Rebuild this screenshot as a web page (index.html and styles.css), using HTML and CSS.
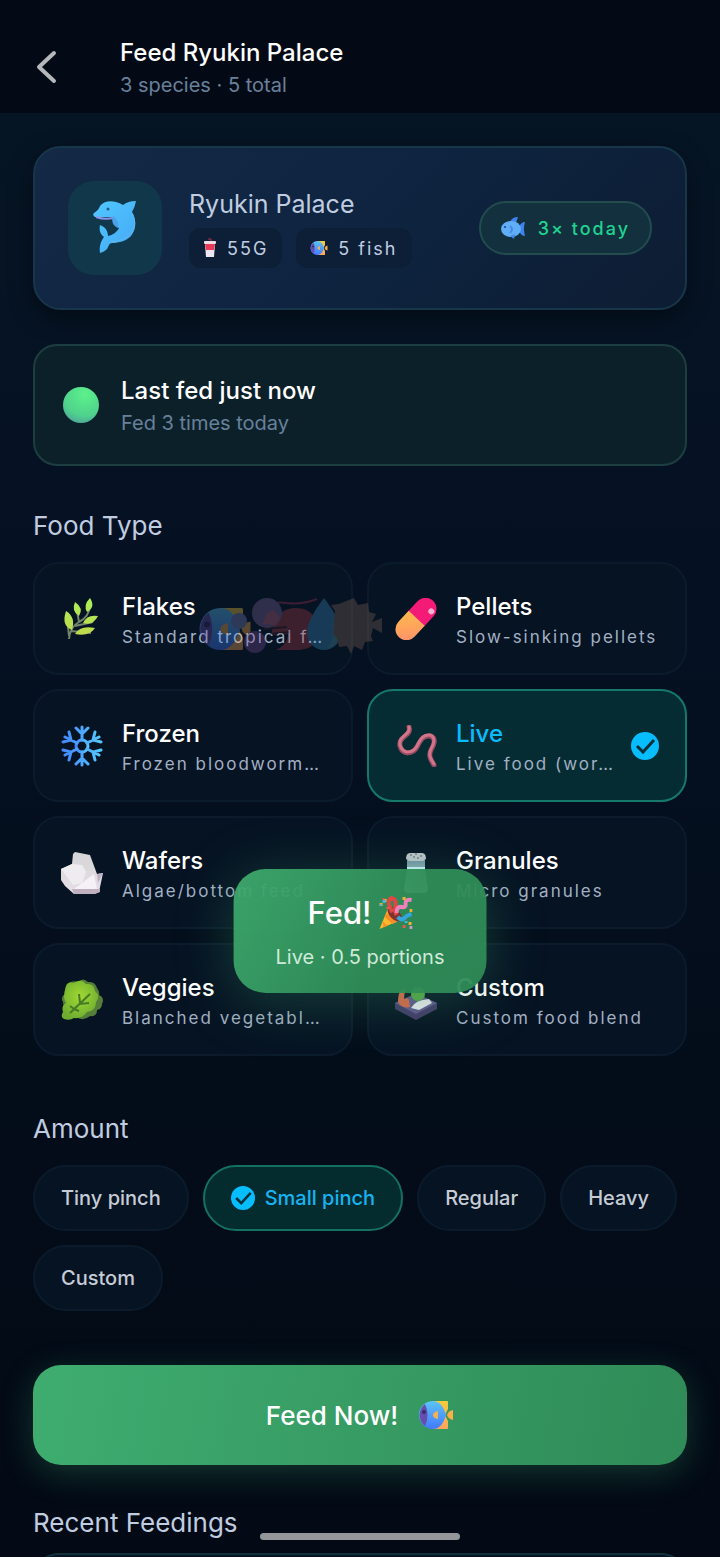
FILE: index.html
```html
<!DOCTYPE html>
<html lang="en">
<head>
<meta charset="utf-8">
<meta name="viewport" content="width=device-width, initial-scale=1">
<title>Feed Ryukin Palace</title>
<link rel="stylesheet" href="styles.css">
</head>
<body>

<!-- shared icons -->
<svg class="sprite" aria-hidden="true">
  <defs>
    <linearGradient id="fishBlue" x1="0" y1="0" x2="0" y2="1"><stop offset="0" stop-color="#5cc4f5"/><stop offset="1" stop-color="#4379ff"/></linearGradient>
    <linearGradient id="fishGold" x1="0" y1="0" x2="0" y2="1"><stop offset="0" stop-color="#f8cc3a"/><stop offset="1" stop-color="#ffa45c"/></linearGradient>
    <linearGradient id="cyan" x1="0" y1="0" x2="1" y2="1"><stop offset="0" stop-color="#50c8ff"/><stop offset="1" stop-color="#45a8f5"/></linearGradient>
    <linearGradient id="ice" x1="0" y1="0" x2="1" y2="0"><stop offset="0" stop-color="#4388ff"/><stop offset="1" stop-color="#55c8ff"/></linearGradient>
    <linearGradient id="leaf" x1="0" y1="0" x2="0" y2="1"><stop offset="0" stop-color="#a9f05a"/><stop offset="1" stop-color="#c0d84c"/></linearGradient>
    <linearGradient id="rock" x1="0" y1="0" x2="0" y2="1"><stop offset="0" stop-color="#d5d4d5"/><stop offset="1" stop-color="#e6e0e9"/></linearGradient>
    <linearGradient id="glass" x1="0" y1="0" x2="0" y2="1"><stop offset="0" stop-color="#7193a3"/><stop offset="1" stop-color="#dcecf0"/></linearGradient>
    <linearGradient id="pillGold" x1="0" y1="0" x2="1" y2="1"><stop offset="0" stop-color="#ffbb4c"/><stop offset="1" stop-color="#ff8d6c"/></linearGradient>
    <radialGradient id="greens" cx=".5" cy=".4" r=".6"><stop offset="0" stop-color="#a0d832"/><stop offset="1" stop-color="#6fad30"/></radialGradient>
  </defs>
  <symbol id="tropical" viewBox="0 0 36 32">
    <path d="M14 2h15a1 1 0 0 1 1 1v7l-3 6 3 6v7a1 1 0 0 1-1 1H14z" fill="url(#fishGold)"/>
    <path d="M35 11v10q-5-1-6-5 1-4 6-5z" fill="#ffad45"/>
    <path d="M15 2q9 0 13 14-4 14-13 14A14 14 0 0 1 15 2z" fill="url(#fishBlue)"/>
    <path d="M7 5a14 14 0 0 0 0 22q5-11 0-22z" fill="#674dac"/>
    <path d="M20 12v8q-5-1-5-4t5-4z" fill="#f6af53"/>
    <circle cx="6" cy="13" r="2" fill="#392c69"/>
  </symbol>
  <symbol id="check" viewBox="0 0 28 28">
    <circle cx="14" cy="14" r="14" fill="#06bdff"/>
    <path d="M6 14l6 6L23 8" fill="none" stroke="#073038" stroke-width="3"/>
  </symbol>
</svg>

<header class="header">
  <button class="back" aria-label="Back">
    <svg width="24" height="34" viewBox="0 0 24 34"><path d="M20 3L5 17l15 14" fill="none" stroke="#b5b7bb" stroke-width="4" stroke-linecap="round" stroke-linejoin="round"/></svg>
  </button>
  <div class="header-text">
    <h1>Feed Ryukin Palace</h1>
    <p class="muted">3 species · 5 total</p>
  </div>
</header>

<main>
  <section class="tank">
    <div class="tank-icon">
      <svg width="46" height="58" viewBox="0 0 46 58">
        <path d="M2 14C5 12 7 10 8 7 11 3 17 1 24 3q4 1 7 3 5-4 13-4-1 6-4 11c5 9 4 18-1 24-5 5-12 7-19 7-3 0-3 3-5 6-2 2-4 3-7 4-1-7 1-12 4-16-4-3-5-7-4-12 6 2 8 7 8 11 5-1 9-4 11-8-4-2-6-6-7-11L3 18q-3-2-1-4z" fill="url(#cyan)"/>
        <path d="M4 18q9 3 17 1" fill="none" stroke="#8a94ed" stroke-width="2"/>
        <path d="M21 17c-2 5 0 10 5 12 1-4 0-8-5-12z" fill="#4ca1e9"/>
        <path d="M40 14c5 9 3 19-5 24-5 3-9 4-16 5" fill="none" stroke="#65b4e8" stroke-width="1"/>
        <circle cx="16" cy="10" r="1.5" fill="#225b83"/>
      </svg>
    </div>
    <div class="tank-info">
      <h2>Ryukin Palace</h2>
      <div class="badges">
        <span class="badge">
          <svg width="14" height="20" viewBox="0 0 14 20"><path d="M8 4V1H5" fill="none" stroke="#a9304d" stroke-width="1"/><path d="M2 6h10l-1 13H3z" fill="#eee5f2"/><path d="M2 6h10l-1 6H3z" fill="#e83b58"/><rect x="1" y="3" width="12" height="3" rx="1" fill="#f0dce5"/></svg>
          55G
        </span>
        <span class="badge"><svg width="18" height="16"><use href="#tropical"/></svg>5 fish</span>
      </div>
    </div>
    <span class="today">
      <svg width="26" height="22" viewBox="0 0 26 22"><path d="M9 5q2-5 8-5l-2 6zM18 10q2-5 6-5-2 6 0 14-4 0-6-5z" fill="#3e82ed"/><ellipse cx="10" cy="12" rx="10" ry="8" fill="#61aef8"/><path d="M9 19l5-2-1 5z" fill="#4387f0"/><path d="M9 9q4 3 0 7" fill="none" stroke="#4688e6" stroke-width="2"/><circle cx="4" cy="10" r="1" fill="#183c8f"/></svg>
      3× today
    </span>
  </section>

  <section class="status">
    <span class="orb"></span>
    <div class="status-text">
      <h3>Last fed just now</h3>
      <p class="muted">Fed 3 times today</p>
    </div>
  </section>

  <h2 class="foods-title">Food Type</h2>
  <div class="foods">
    <label class="food">
      <input type="radio" name="food">
      <svg class="food-icon" viewBox="0 0 42 42">
        <path d="M8 41Q9 29 18 24 28 19 29 8M18 24L16 13M14 28l18-4M10 33l20 2M8 38L6 20" fill="none" stroke="#73846b" stroke-width="2"/>
        <path d="M29 0q6 9-3 14-4-7 3-14zM14 4q9 6 4 14-8-5-4-14zM37 18q-5 10-15 7 4-9 15-7zM34 30q-6 9-20 6 5-9 20-6zM5 13q10 6 6 19Q0 28 5 13z" fill="url(#leaf)"/>
      </svg>
      <span class="food-text"><b>Flakes</b><small>Standard tropical f…</small></span>
    </label>
    <label class="food">
      <input type="radio" name="food">
      <svg class="food-icon" viewBox="0 0 42 42">
        <g transform="rotate(43 21 21)">
          <path d="M10 21V7a11 11 0 0 1 22 0v14z" fill="#f31b76"/>
          <path d="M10 20h22v15a11 11 0 0 1-22 0z" fill="url(#pillGold)"/>
          <circle cx="27" cy="5" r="3" fill="#ffb1cf"/>
        </g>
      </svg>
      <span class="food-text"><b>Pellets</b><small>Slow-sinking pellets</small></span>
    </label>
    <label class="food">
      <input type="radio" name="food">
      <svg class="food-icon" viewBox="0 0 42 42">
        <g fill="none" stroke="url(#ice)" stroke-width="3" stroke-linecap="round">
          <circle cx="21" cy="21" r="6"/>
          <path d="M21 15V2M15 3l6 6 6-6M21 27v13M15 39l6-6 6 6M16 18L4 12M8 7l2 8-8 2M26 24l12 6M34 35l-2-8 8-2M26 18l12-6M34 7l-2 8 8 2M16 24L4 30M8 35l2-8-8-2"/>
        </g>
      </svg>
      <span class="food-text"><b>Frozen</b><small>Frozen bloodworm…</small></span>
    </label>
    <label class="food">
      <input type="radio" name="food" checked>
      <svg class="food-icon" viewBox="0 0 42 42">
        <path d="M14 2C17 11 3 11 5 21c3 10 13 8 17 1 3-6 6-12 13-11 7 2 4 9 1 14-3 6 0 10 3 15" fill="none" stroke="#954b64" stroke-width="5" stroke-linecap="round"/>
        <path d="M14 2C16 10 3 11 5 20c3 10 13 8 17 1 3-6 6-12 13-11 6 2 4 9 1 14-3 6 0 10 3 15" fill="none" stroke="#d27589" stroke-width="3" stroke-linecap="round"/>
      </svg>
      <span class="food-text"><b>Live</b><small>Live food (wor…</small></span>
      <svg class="check"><use href="#check"/></svg>
    </label>
    <label class="food">
      <input type="radio" name="food">
      <svg class="food-icon" viewBox="0 0 42 42">
        <path d="M12 2l2-2 15 3 7 19 6-1-4 19-5 2H13L4 34 0 28V17l11-5z" fill="url(#rock)"/>
        <path d="M0 17l11-5 10 1 4 7-4 11-9 2z" fill="#efecef"/>
        <path d="M21 31l12-9 3 16-23-1z" fill="#f6f1f6"/>
        <path d="M11 37h28v3l-5 2H13zM36 22l6-1-5 10z" fill="#bfb0bf"/>
      </svg>
      <span class="food-text"><b>Wafers</b><small>Algae/bottom feed</small></span>
    </label>
    <label class="food">
      <input type="radio" name="food">
      <svg class="food-icon" viewBox="0 0 42 42">
        <path d="M12 8h18v10l3 18q0 5-4 5H13q-4 0-4-5l3-18z" fill="url(#glass)"/>
        <path d="M12 15h18v3H12z" fill="#c8f4fa"/>
        <path d="M11 7q0-6 4-6h12q4 0 4 6l-3 2H14z" fill="#bec4cb"/>
        <path d="M15 3h2M20 2h2M25 4h2M18 5h2M22 6h2" stroke="#555d66"/>
      </svg>
      <span class="food-text"><b>Granules</b><small>Micro granules</small></span>
    </label>
    <label class="food">
      <input type="radio" name="food">
      <svg class="food-icon" viewBox="0 0 42 42">
        <path d="M6 5q5-4 11-2 5-5 10 0 7-1 9 6 3 4 2 7 6 3 3 9 0 5-5 6 0 7-7 6-6 5-12 2-8 1-9-7-6-2-6-9-3-5 2-8-1-6 2-10z" fill="#557f38"/>
        <path d="M5 8q1-6 8-4 7-5 12 1 8-1 9 7 6 5 1 11 0 9-9 10-5 7-13 6-4 3-10 1-4-2-1-7-2-6 3-9-4-5 0-16z" fill="url(#greens)"/>
        <path d="M9 34L29 15M19 24l-1-9M18 25l10-1M13 30l-4-3M13 30l5 2" fill="none" stroke="#457a27" stroke-width="2"/>
      </svg>
      <span class="food-text"><b>Veggies</b><small>Blanched vegetabl…</small></span>
    </label>
    <label class="food">
      <input type="radio" name="food">
      <svg class="food-icon" viewBox="0 0 42 42">
        <path d="M0 24l21-10 21 10v6L21 41 0 30z" fill="#433967"/>
        <path d="M0 24l21-9 21 9-21 11z" fill="#625690"/>
        <path d="M3 23q0-13 7-13l-1 10q4-2 5 1l1 7q-8 2-12-5z" fill="#dd6548"/>
        <circle cx="23" cy="15" r="7" fill="#56a644"/>
        <path d="M16 29q4-8 18-9l3 4-13 7z" fill="#ebe9ed"/>
      </svg>
      <span class="food-text"><b>Custom</b><small>Custom food blend</small></span>
    </label>
  </div>

  <h2 class="amount-title">Amount</h2>
  <div class="chips">
    <label class="chip"><input type="radio" name="amount">Tiny pinch</label>
    <label class="chip"><input type="radio" name="amount" checked><svg><use href="#check"/></svg>Small pinch</label>
    <label class="chip"><input type="radio" name="amount">Regular</label>
    <label class="chip"><input type="radio" name="amount">Heavy</label>
    <label class="chip"><input type="radio" name="amount">Custom</label>
  </div>

  <button class="feed-button">Feed Now! <svg width="36" height="32"><use href="#tropical"/></svg></button>

  <h2>Recent Feedings</h2>
  <div class="recent"></div>
</main>

<!-- fish that gather after a feeding -->
<svg class="swimmers" width="184" height="56" viewBox="0 0 184 56" aria-hidden="true">
  <use href="#tropical" x="0" y="7" width="54" height="48"/>
  <circle cx="57" cy="44" r="11" fill="#764c91"/>
  <path d="M62 15q10-13 27-10 14 2 30-4" fill="none" stroke="#a5334f" stroke-width="2"/>
  <path d="M78 52c8-4 12-9 12-16l-16 1c0-17 10-27 24-27 16 0 23 12 23 24s-10 18-22 18z" fill="#a43a42"/>
  <path d="M66 31l23-2M72 36l20-2" stroke="#40202e" stroke-width="2"/>
  <circle cx="69" cy="15" r="15" fill="#7e679d"/>
  <path d="M69 15l6-3 7 7-4 8-13-1z" fill="#bf617f"/>
  <circle cx="41" cy="23" r="8" fill="#7983bb"/>
  <path d="M126 0q17 22 17 35a17 17 0 0 1-34 0q0-13 17-35z" fill="#3889bd"/>
  <path d="M134 25l8 3q3 19-13 22 8-10 5-25z" fill="#499aaa"/>
  <path d="M156 0l4 7 10-2 1 9 7 2-4 8 10-4v15l-9-5-2 8 2 5-8 1-3 8-8-4-3 8-4-8-8 1-2-9-4-4 1-14 1-9-4-6 8-1z" fill="#806357"/>
</svg>

<div class="toast" role="status">
  <div class="toast-title">
    Fed!
    <svg width="34" height="34" viewBox="0 0 34 34">
      <path d="M10 11l12 13L1 33z" fill="#ffb92e"/>
      <path d="M8 17l10 9-4 2-8-7zM4 25l5 5-4 1z" fill="#f68e28"/>
      <ellipse cx="16" cy="18" rx="5" ry="9" transform="rotate(-42 16 18)" fill="#80332e"/>
      <path d="M14 16q-7-10-1-14 5 1 4 8-1 5 1 9" fill="none" stroke="#df4745" stroke-width="4"/>
      <path d="M18 17q0-7 5-6 5 1 4-4 0-4 6-3" fill="none" stroke="#ef82bb" stroke-width="4"/>
      <path d="M19 21q4 4 7 1 1-2 7-4" fill="none" stroke="#35a6dd" stroke-width="4"/>
      <path d="M5 3h3v3H5zM1 7h3v3H1zM24 1h3v3h-3zM31 13h3v3h-3zM30 26h3v3h-3z" fill="#f4ae30"/>
      <path d="M4 2h2v2H4zM24 29h3v3h-3zM8 11h3v2H8z" fill="#e55b4e"/>
      <path d="M4 4h3v3H4zM26 25h3v2h-3zM1 8h2v2H1z" fill="#49b3ec"/>
      <path d="M31 30h3v3h-3z" fill="#d492d5"/>
    </svg>
  </div>
  <p>Live · 0.5 portions</p>
</div>

<div class="home-bar"></div>

</body>
</html>
```

FILE: styles.css
```css
* {
  box-sizing: border-box;
}
body {
  margin: 0;
  height: 100vh;
  overflow: hidden;
  position: relative;
  font-family: Inter, "Open Sans", sans-serif;
  color: #fff;
  background: linear-gradient(#061624, #051123 35%, #030c18 75%, #030a15);
}
h1, h2, h3, p {
  margin: 0;
  font-weight: 500;
}
h1, h3 {
  font-size: 24px;
  line-height: 32px;
}
h2 {
  font-size: 26px;
  line-height: 32px;
  font-weight: 400;
  color: #c0cde0;
}
button {
  font-family: inherit;
  color: inherit;
  border: none;
  cursor: pointer;
}
.sprite {
  position: absolute;
  width: 0;
  height: 0;
}
.muted {
  font-size: 20px;
  line-height: 32px;
  font-weight: 400;
  color: #68819b;
}
.header {
  display: flex;
  align-items: center;
  gap: 60px;
  height: 113px;
  padding: 20px 34px 0;
  background: #030a16;
}
.header-text, .status-text {
  padding-top: 4px;
}
.back {
  display: flex;
  width: 26px;
  padding: 0;
  background: none;
}
main {
  padding: 33px 33px 0;
}
.tank {
  display: flex;
  align-items: center;
  gap: 27px;
  padding: 33px;
  border: 2px solid #17364a;
  border-radius: 28px;
  background: linear-gradient(135deg, #132945, #0e2440 50%, #0d1d33);
  box-shadow: 0 8px 24px rgba(0, 0, 0, 0.4);
}
.tank-icon {
  display: flex;
  align-items: center;
  justify-content: center;
  width: 94px;
  height: 94px;
  border-radius: 26px;
  background: #10384a;
}
.tank-info {
  flex: 1;
}
.tank-info h2 {
  font-size: 25px;
}
.badges {
  display: flex;
  gap: 14px;
  margin-top: 8px;
}
.badge {
  display: flex;
  align-items: center;
  gap: 10px;
  height: 40px;
  padding: 0 14px;
  border-radius: 12px;
  background: #0d1f37;
  color: #c0cde0;
  font-size: 18px;
  letter-spacing: 2px;
}
.today {
  display: flex;
  align-items: center;
  gap: 11px;
  height: 54px;
  padding: 0 20px;
  border: 2px solid #234c4f;
  border-radius: 27px;
  background: #12303d;
  color: #20d391;
  font-size: 18px;
  font-weight: 500;
  letter-spacing: 2px;
}
.status {
  display: flex;
  align-items: center;
  gap: 22px;
  height: 122px;
  margin-top: 34px;
  padding: 0 28px;
  border: 2px solid #1d3e41;
  border-radius: 24px;
  background: #0c2029;
}
.orb {
  width: 36px;
  height: 36px;
  border-radius: 50%;
  background: radial-gradient(circle at 60% 20%, #5df18b, #4fd28c 60%, #4d89a0);
}
.foods-title {
  margin: 44px 0 20px;
}
.foods {
  display: grid;
  grid-template-columns: 1fr 1fr;
  gap: 14px;
}
.food {
  display: flex;
  align-items: center;
  gap: 19px;
  min-width: 0;
  height: 113px;
  padding: 0 26px;
  border: 2px solid #0b1b2c;
  border-radius: 26px;
  background: #061323;
  cursor: pointer;
}
.food input, .chip input {
  position: absolute;
  opacity: 0;
}
.food-icon {
  flex: none;
  width: 42px;
  height: 42px;
}
.food-text {
  flex: 1;
  min-width: 0;
  padding-top: 4px;
  white-space: nowrap;
}
.food b {
  display: block;
  font-size: 24px;
  line-height: 32px;
  font-weight: 500;
}
.food small {
  display: block;
  font-size: 17px;
  line-height: 28px;
  letter-spacing: 2px;
  color: #a2b0c3;
}
.food:has(input:checked) {
  border-color: #147969;
  background: #052c32;
}
.food:has(input:checked) b {
  color: #0abcff;
}
.check {
  flex: none;
  width: 28px;
  height: 28px;
}
.amount-title {
  margin: 57px 0 20px;
}
.chips {
  display: flex;
  flex-wrap: wrap;
  gap: 14px;
}
.chip {
  display: flex;
  align-items: center;
  gap: 10px;
  height: 66px;
  padding: 0 26px;
  border: 2px solid #0b1b2c;
  border-radius: 33px;
  background: #061323;
  color: #c5ccd6;
  font-size: 20px;
  font-weight: 500;
  cursor: pointer;
}
.chip svg {
  width: 24px;
  height: 24px;
}
.chip:has(input:checked) {
  border-color: #147060;
  background: #042b2e;
  color: #16b4f2;
}
.feed-button {
  display: flex;
  align-items: center;
  justify-content: center;
  gap: 20px;
  width: 100%;
  height: 100px;
  margin: 54px 0 42px;
  border-radius: 28px;
  background: linear-gradient(100deg, #3fad70, #2f8b57);
  box-shadow: 0 8px 32px rgba(55, 155, 105, 0.3);
  font-size: 26px;
  font-weight: 500;
}
.recent {
  height: 120px;
  margin-top: 14px;
  border: 2px solid #123039;
  border-radius: 26px;
  background: #061323;
}
/* overlays */
.swimmers {
  position: absolute;
  top: 598px;
  left: 198px;
  opacity: 0.34;
}
.toast {
  position: absolute;
  top: 869px;
  left: 50%;
  transform: translateX(-50%);
  padding: 24px 42px 20px;
  border-radius: 32px;
  background: linear-gradient(120deg, rgba(62, 170, 109, 0.95), rgba(47, 142, 88, 0.95) 60%, rgba(47, 139, 87, 0.95));
  box-shadow: 0 8px 56px rgba(55, 155, 105, 0.35);
  text-align: center;
  white-space: nowrap;
}
.toast-title {
  display: flex;
  align-items: center;
  justify-content: center;
  gap: 7px;
  font-size: 31px;
  line-height: 40px;
  font-weight: 500;
}
.toast p {
  margin-top: 8px;
  font-size: 20px;
  line-height: 32px;
  font-weight: 400;
  color: #d0ead9;
}
.home-bar {
  position: absolute;
  bottom: 17px;
  left: 50%;
  transform: translateX(-50%);
  width: 200px;
  height: 7px;
  border-radius: 4px;
  background: #949699;
}
```
